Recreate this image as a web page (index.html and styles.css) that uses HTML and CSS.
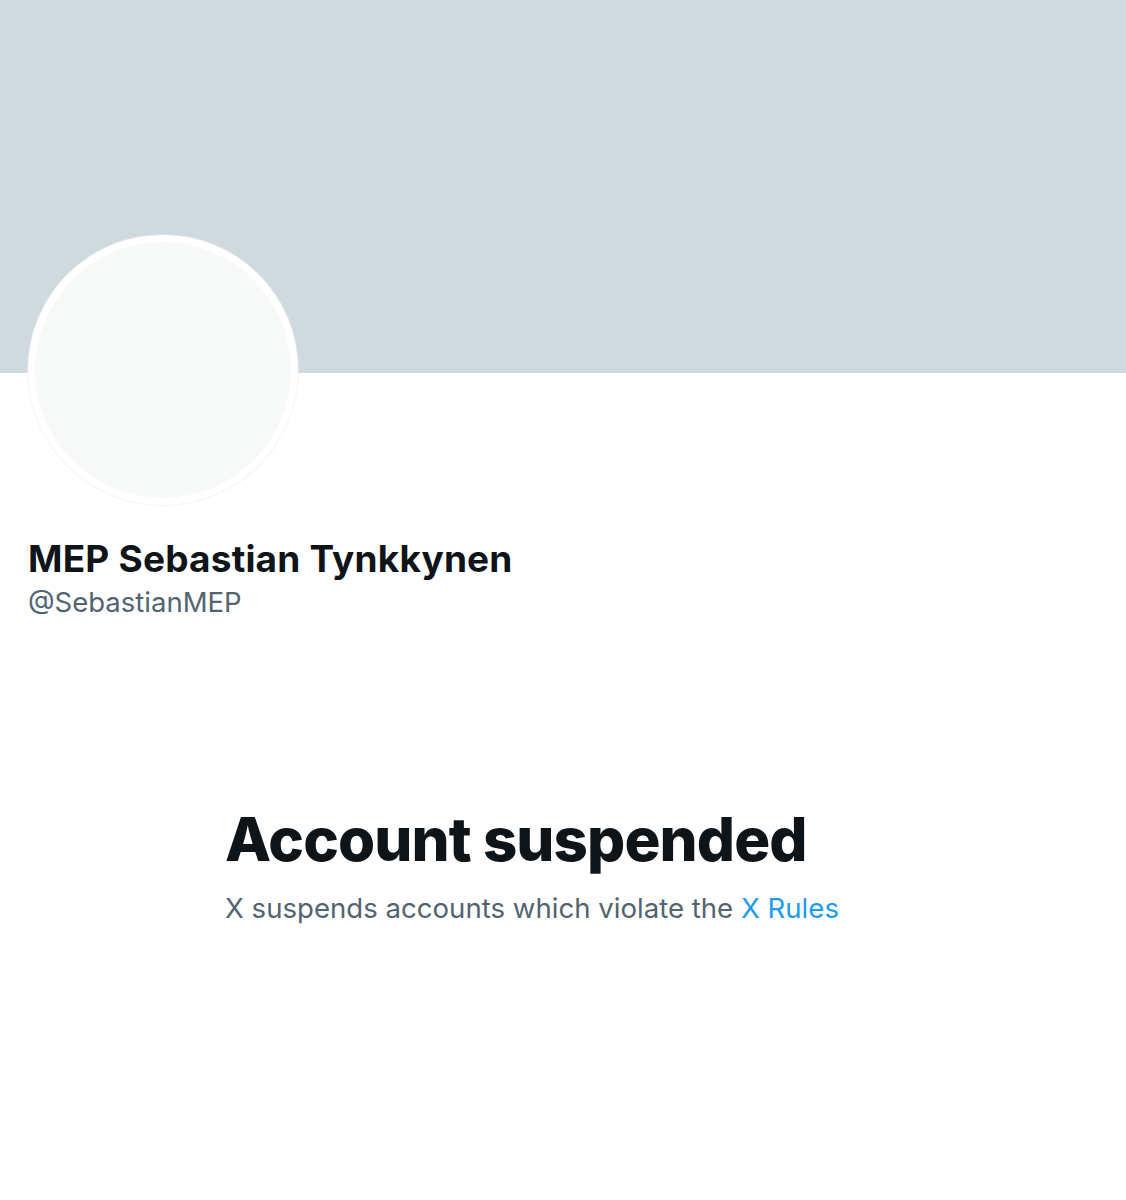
FILE: index.html
```html
<!DOCTYPE html>
<html lang="en">
<head>
<meta charset="utf-8">
<title>MEP Sebastian Tynkkynen</title>
<link rel="stylesheet" href="styles.css">
</head>
<body>
<div class="page">
  <div class="banner"></div>
  <div class="profile">
    <div class="avatar"><div class="avatar-inner"></div></div>
    <div class="names">
      <div class="name">MEP Sebastian Tynkkynen</div>
      <div class="handle">@SebastianMEP</div>
    </div>
  </div>
  <div class="empty">
    <div class="title">Account suspended</div>
    <div class="sub">X suspends accounts which violate the <a class="link" href="#">X Rules</a></div>
  </div>
</div>
</body>
</html>
```
FILE: styles.css
```css
html, body {
  margin: 0;
  padding: 0;
  background: #ffffff;
}
body {
  font-family: Inter, "Noto Sans", "Liberation Sans", sans-serif;
  width: 1126px;
  height: 1200px;
  overflow: hidden;
}
.banner {
  height: 373px;
  background: #cfd9de;
}
.profile {
  padding-left: 28px;
}
.avatar {
  width: 270px;
  height: 270px;
  margin-top: -138px;
  border-radius: 50%;
  background: #ffffff;
  display: flex;
  align-items: center;
  justify-content: center;
  box-shadow: 0 0 0 1px rgba(230,236,240,0.6);
}
.avatar-inner {
  width: 256px;
  height: 256px;
  border-radius: 50%;
  background: #f7f9f9;
}
.names {
  margin-top: 32px;
}
.name {
  font-size: 37px;
  font-weight: 700;
  color: #0f1419;
  line-height: 44px;
  letter-spacing: 0.2px;
}
.handle {
  font-size: 27.5px;
  color: #536471;
  line-height: 34px;
  margin-top: 4px;
}
.empty {
  padding-left: 225px;
  margin-top: 184px;
}
.title {
  font-size: 60px;
  font-weight: 800;
  color: #0f1419;
  line-height: 72px;
  letter-spacing: -0.9px;
}
.sub {
  font-size: 27.6px;
  color: #536471;
  line-height: 36px;
  margin-top: 15px;
}
.link {
  color: #1d9bf0;
  text-decoration: none;
}
```
